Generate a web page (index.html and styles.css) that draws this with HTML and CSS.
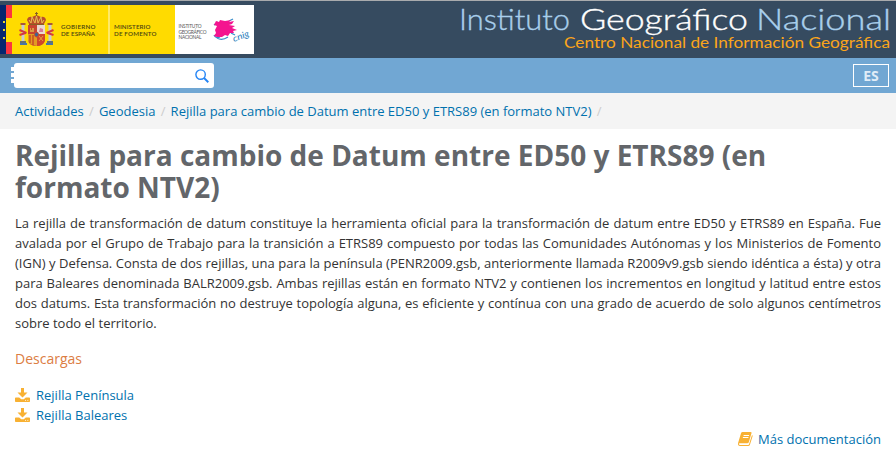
FILE: index.html
```html
<!DOCTYPE html>
<html lang="es">
<head>
<meta charset="utf-8">
<title>Rejilla para cambio de Datum</title>
<link rel="stylesheet" href="styles.css">
</head>
<body>
<header class="header">
  <svg class="logos" width="255" height="57" viewBox="0 0 255 57">
    <rect y="4" width="6" height="49" fill="#06266f"/>
    <g fill="#e6d52a"><rect x="3" y="20" width="2" height="2"/><rect x="3" y="28" width="2" height="2"/><rect x="3" y="36" width="2" height="2"/></g>
    <rect x="6" y="4" width="170" height="49" fill="#ffdb00"/>
    <path d="M6 4h6v13H6zM6 41h6v12H6z" fill="#fb3440"/>
    <rect x="175" y="4" width="79" height="49" fill="#fff"/>
    <path d="M109 4v49" stroke="#fff2a0" stroke-width="1.300"/>
    <g>
      <path d="M21.500 24h3v17h-3zM48.500 24h3v17h-3z" fill="#c9cbd0"/>
      <path d="M20.500 22h5v2h-5zM47.500 22h5v2h-5z" fill="#a8573a"/>
      <path d="M20 40h6v3h-6zM47 40h6v3h-6z" fill="#69736f"/>
      <path d="M20 43h7M46 43h7" stroke="#4875a5" stroke-width="2"/>
      <path d="M19.500 29l7 3M19.500 34l6-2M53.500 29l-7 3M53.500 34l-6-2" stroke="#d43b3c" stroke-width="2"/>
      <path d="M28 24h17v15q-1 6-8.500 6-7.500 0-8.500-6z" fill="#c74431"/>
      <path d="M37 24h8v9h-8z" fill="#ead9cf"/>
      <path d="M28 33h9v12q-8-1-9-6z" fill="#e39b22"/>
      <path d="M37 33h8v6q-1 5-8 6z" fill="#d0482c"/>
      <path d="M30 34v8M33 34v10" stroke="#bf3929" stroke-width="1.200"/>
      <path d="M30 31v-4h1v2h1v-2h2v4z" fill="#d99b45"/>
      <path d="M39 31l1-4 3 1v3z" fill="#d77a9b"/>
      <path d="M39 35l4 5M43 35l-4 5" stroke="#e8a83c" stroke-width=".9"/>
      <ellipse cx="36.500" cy="33.500" rx="2" ry="2.500" fill="#3c6592" stroke="#cf4630"/>
      <path d="M29 23l-2-4q1-4 5-3l4.500-2 4.500 2q4-1 5 3l-2 4z" fill="#b94f2b"/>
      <path d="M29 19l2 3 1-6 3 6 1.500-7 1.500 7 3-6 1 6 2-3" fill="none" stroke="#e7bf55"/>
      <path d="M36.500 11v4M35 12.500h3M29 23.500h15" stroke="#885e25"/>
    </g>
    <g class="gov">
      <text x="61" y="27.500" textLength="34.500">GOBIERNO</text><text x="61" y="34.500" textLength="34">DE ESPAÑA</text>
      <text x="114" y="27.500" textLength="36.500">MINISTERIO</text><text x="114" y="34.500" textLength="42.500">DE FOMENTO</text>
    </g>
    <g class="ign">
      <text x="178.500" y="27" textLength="23">INSTITUTO</text><text x="178.500" y="32.500" textLength="28">GEOGRÁFICO</text><text x="178.500" y="38" textLength="23">NACIONAL</text>
    </g>
    <path d="M214 24l4-3M216 29l3-1M214 34q2 4 6 2M217 37q5 3 11-1M229 20l4-2M231 32l4 2" stroke="#398dca" stroke-width="1.300" fill="none"/>
    <path d="M216 20l3 1 1-2 5 1 6-1-2 2 5-1-2 3-3 1 6 1-3 2 5 2-4 1 1 2-4 0-2 3-3-1-3 2-5 0-3-1 2-3-1-3 2-4-3-1 1-2z" fill="#f4148f"/>
    <text class="cnig" transform="translate(234 41) rotate(-21)" textLength="17" lengthAdjust="spacingAndGlyphs">cnig</text>
  </svg>
  <svg class="brand" width="440" height="57" viewBox="0 0 440 57">
    <g class="name">
      <text x="4" y="28.500" fill="#a9cfec" stroke="#a9cfec" textLength="111" lengthAdjust="spacingAndGlyphs">Instituto</text>
      <text x="125" y="28.500" fill="#fff" stroke="#fff" textLength="168" lengthAdjust="spacingAndGlyphs">Geográfico</text>
      <text x="301" y="28.500" fill="#a9cfec" stroke="#a9cfec" textLength="135" lengthAdjust="spacingAndGlyphs">Nacional</text>
    </g>
    <text class="sub" x="109" y="47" textLength="326" lengthAdjust="spacingAndGlyphs">Centro Nacional de Información Geográfica</text>
  </svg>
</header>
<nav class="bar">
  <span class="menu"><i></i><i></i><i></i></span>
  <div class="search">
    <svg width="14" height="14" viewBox="0 0 14 14" fill="none" stroke="#2384f5"><circle cx="5.600" cy="5.600" r="4.700" stroke-width="1.400"/><path d="M9 9l4.300 4.200" stroke-width="1.900"/></svg>
  </div>
  <a class="lang">ES</a>
</nav>
<div class="crumbs"><a>Actividades</a><i>/</i><a>Geodesia</a><i>/</i><a>Rejilla para cambio de Datum entre ED50 y ETRS89 (en formato NTV2)</a><i>/</i></div>
<main class="content">
  <h1>Rejilla para cambio de Datum entre ED50 y ETRS89 (en formato NTV2)</h1>
  <p class="text">La rejilla de transformación de datum constituye la herramienta oficial para la transformación de datum entre ED50 y ETRS89 en España. Fue avalada por el Grupo de Trabajo para la transición a ETRS89 compuesto por todas las Comunidades Autónomas y los Ministerios de Fomento (IGN) y Defensa. Consta de dos rejillas, una para la península (PENR2009.gsb, anteriormente llamada R2009v9.gsb siendo idéntica a ésta) y otra para Baleares denominada BALR2009.gsb. Ambas rejillas están en formato NTV2 y contienen los incrementos en longitud y latitud entre estos dos datums. Esta transformación no destruye topología alguna, es eficiente y contínua con una grado de acuerdo de solo algunos centímetros sobre todo el territorio.</p>
  <h2>Descargas</h2>
  <ul class="downloads">
    <li><svg width="15" height="14" viewBox="0 0 15 14"><path d="M6 0h3v4.500h3.500l-5 5-5-5H6zM.8 9.500h3.400l2 1.800h2.600l2-1.800h3.400q.8 0 .8.800v2.900q0 .8-.8.800H.8q-.8 0-.8-.8v-2.900q0-.8.8-.8z" fill="#f8b133"/><path d="M10 12.400h1M12.300 12.400h1" stroke="#fff" stroke-width=".8"/></svg><a>Rejilla Península</a></li>
    <li><svg width="15" height="14" viewBox="0 0 15 14"><path d="M6 0h3v4.500h3.500l-5 5-5-5H6zM.8 9.500h3.400l2 1.800h2.600l2-1.800h3.400q.8 0 .8.800v2.900q0 .8-.8.800H.8q-.8 0-.8-.8v-2.900q0-.8.8-.8z" fill="#f8b133"/><path d="M10 12.400h1M12.300 12.400h1" stroke="#fff" stroke-width=".8"/></svg><a>Rejilla Baleares</a></li>
  </ul>
  <div class="more"><svg width="15" height="14" viewBox="0 0 15 14"><path d="M4.500 0h8q1.400 0 1 1.300l-2.700 8.900q-.3 1-1.500 1H1.700q-1 .2-.9.900.1.800 1.100.8h8.200q.7 0 .9-.7L14 3q.8.300.6 1.200l-2.700 8.600q-.4 1.200-1.600 1.200H2Q-.3 14 0 11.300L3 1.200Q3.500 0 4.500 0z" fill="#f8b133"/><path d="M5.600 3.500h5.500M4.900 5.500h5.500" stroke="#fff"/></svg><a>Más documentación</a></div>
</main>
</body>
</html>
```

FILE: styles.css
```css
* { box-sizing: border-box; }
body { margin: 0; background: #fff; color: #333; font: 13px/20px "Open Sans", sans-serif; overflow: hidden; }
svg { display: block; flex: none; overflow: visible; }
a { color: #0071ae; }
.header { height: 58px; display: flex; justify-content: space-between; background: #364b60; border-top: 1px solid #a9abad; }
.gov { font: 600 6.2px Lato, sans-serif; fill: #4b4412; }
.ign { font: 4.8px Lato, sans-serif; fill: #555; }
.cnig { font: italic 400 9px Lato, sans-serif; fill: #287dbb; }
.brand { margin-right: 1px; }
.name { font: 300 29.5px Lato, sans-serif; stroke-width: .35px; }
.sub { font: 400 14.5px Lato, sans-serif; fill: #fba51a; }
.bar { height: 35px; display: flex; align-items: flex-start; padding: 5px 7px 0 11px; background: #71a7d3; }
.menu { width: 3px; padding-top: 4px; display: grid; gap: 2px; }
.menu i { height: 4px; background: #fff; }
.search { width: 200px; height: 25px; border-radius: 3px; background: #fff; display: flex; justify-content: flex-end; padding: 6px 5px; }
.lang { margin: 1px 0 0 auto; width: 36px; height: 23px; border: 1px solid #fff; color: #e0ecf7; font-weight: 700; font-size: 14px; line-height: 22px; text-align: center; }
.crumbs { height: 36px; padding: 8px 15px; background: #f4f4f4; display: flex; }
.crumbs i { font-style: normal; color: #ccc; padding: 0 5.2px; }
.content { padding: 10px 15px 0; }
h1 { margin: 0; font-size: 28px; line-height: 32px; font-weight: 700; color: #63666a; }
.text { margin: 10px 0 0; text-align: justify; }
h2 { margin: 16px 0 0; font-size: 14px; line-height: 20px; font-weight: 400; color: #dc7d43; }
.downloads { margin: 16px 0 0; padding: 0; list-style: none; }
.downloads li, .more { display: flex; align-items: center; gap: 6px; height: 20px; }
.more { justify-content: flex-end; margin-top: 4px; gap: 5px; }
```
